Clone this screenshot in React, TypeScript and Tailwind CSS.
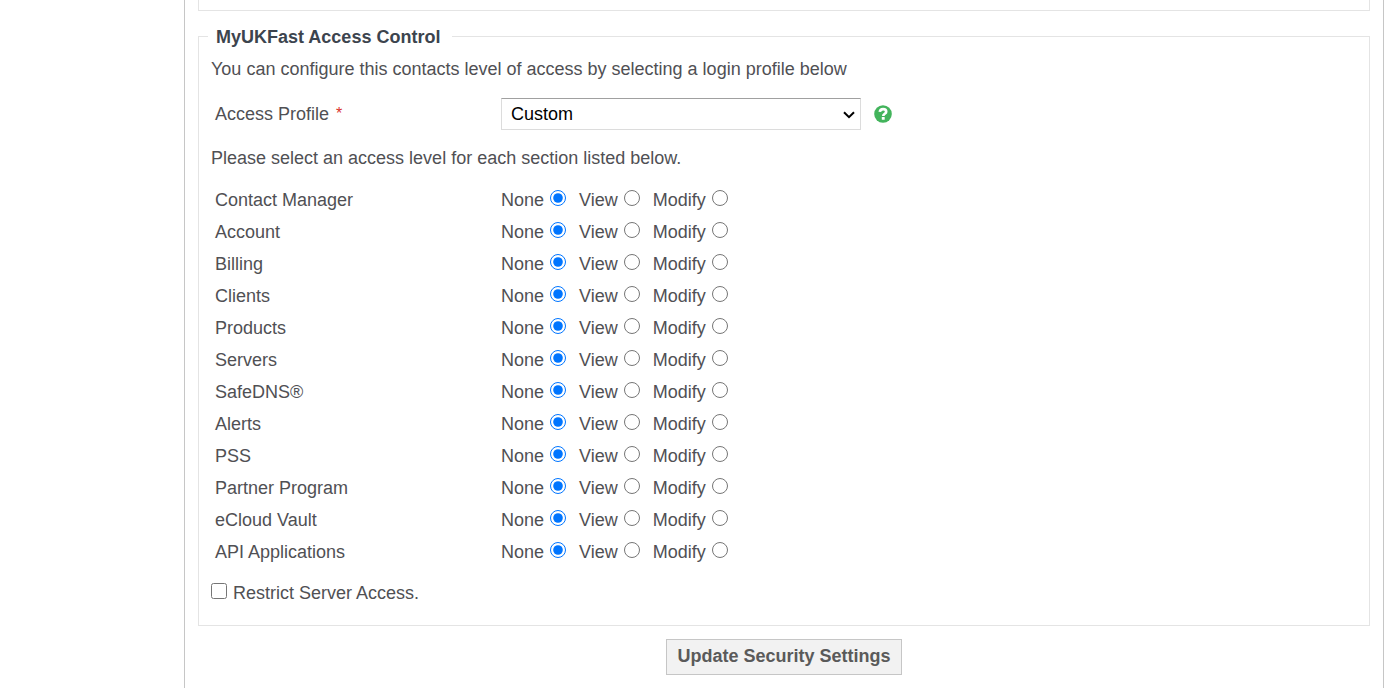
import { useState } from "react";

const sections = [
  "Contact Manager",
  "Account",
  "Billing",
  "Clients",
  "Products",
  "Servers",
  "SafeDNS®",
  "Alerts",
  "PSS",
  "Partner Program",
  "eCloud Vault",
  "API Applications",
];

const levels = ["None", "View", "Modify"];

function ProfileSelect() {
  return (
    <div className="grid w-90 items-center">
      <select
        id="access-profile"
        defaultValue="Custom"
        className="col-start-1 row-start-1 h-8 w-full appearance-none border border-[#dcdcdc] border-t-[#a0a0a0] bg-white pr-8 pl-[9px] text-black"
      >
        <option>Custom</option>
      </select>
      <svg
        viewBox="0 0 12 8"
        className="pointer-events-none col-start-1 row-start-1 mt-0.5 mr-1.5 h-2 w-3 justify-self-end"
        fill="none"
        stroke="#000"
        strokeWidth="2"
        aria-hidden="true"
      >
        <path d="M1 1.2 6 6.2 11 1.2" />
      </svg>
    </div>
  );
}

function HelpButton() {
  return (
    <button type="button" aria-label="Help" className="ml-[13px] size-4.5">
      <svg viewBox="0 0 18 18" className="size-4.5" aria-hidden="true">
        <circle cx="9" cy="9" r="8.8" fill="#43b45c" />
        <path
          d="M5.8 6.9C6.1 4.9 7.3 4.1 9.1 4.1c1.9 0 3.1 1 3.1 2.6 0 2.1-2.9 2-2.9 4.2"
          fill="none"
          stroke="#fff"
          strokeWidth="2.7"
        />
        <rect x="7.8" y="12" width="2.9" height="2.8" rx="0.4" fill="#fff" />
      </svg>
    </button>
  );
}

function SectionRow({ name }: { name: string }) {
  const [level, setLevel] = useState("None");
  return (
    <div role="radiogroup" aria-label={name} className="flex h-8 items-center">
      <span className="w-[286px] shrink-0">{name}</span>
      <div className="flex gap-[13px]">
        {levels.map((option) => (
          <label key={option} className="flex items-center gap-1.5">
            {option}
            <input
              type="radio"
              name={name}
              value={option}
              checked={level === option}
              onChange={() => setLevel(option)}
              className="mb-1 size-4"
            />
          </label>
        ))}
      </div>
    </div>
  );
}

export default function App() {
  return (
    <div className="flex min-h-screen bg-white pr-0.5 pl-[184px] font-['Liberation_Sans',Arial,sans-serif] text-lg/6 text-[#505054]">
      <main className="flex-1 border-x border-[#c6c6c6] px-[13px] pb-3">
        <div className="h-[11px] border border-t-0 border-[#e4e4e4]" />
        <form onSubmit={(event) => event.preventDefault()}>
          <fieldset className="mt-[13px] border border-[#e4e4e4] px-3 pb-5">
            <legend className="-ml-[3px] pt-px pr-3 pl-2 font-bold text-[#3c444e]">MyUKFast Access Control</legend>
            <p className="mt-2">You can configure this contacts level of access by selecting a login profile below</p>
            <div className="mt-[17px] flex items-center pl-1">
              <label htmlFor="access-profile" className="flex w-[286px] shrink-0 gap-[7px]">
                Access Profile <span className="text-base/6 text-[#d9342b]">*</span>
              </label>
              <ProfileSelect />
              <HelpButton />
            </div>
            <p className="mt-4">Please select an access level for each section listed below.</p>
            <div className="mt-3.5 pl-1">
              {sections.map((name) => (
                <SectionRow key={name} name={name} />
              ))}
            </div>
            <label className="mt-[13px] flex w-fit items-center gap-1.5">
              <input type="checkbox" className="mb-1 size-4" />
              Restrict Server Access.
            </label>
          </fieldset>
          <div className="mt-[13px] flex justify-center">
            <button
              type="submit"
              className="h-9 border border-[#c6c6c6] bg-[#f2f2f2] px-2.5 pb-0.5 font-bold text-[#5a5a5a]"
            >
              Update Security Settings
            </button>
          </div>
        </form>
      </main>
    </div>
  );
}
